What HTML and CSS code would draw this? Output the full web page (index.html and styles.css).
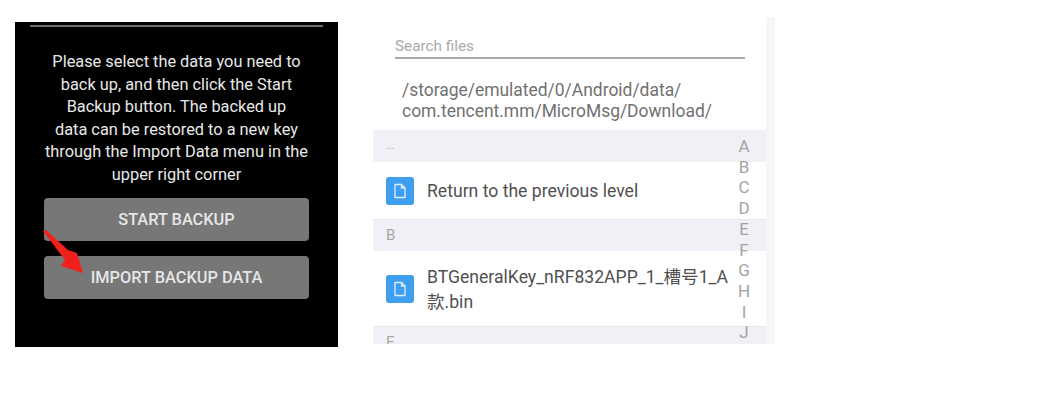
FILE: index.html
```html
<!DOCTYPE html>
<html lang="en">
<head>
  <meta charset="UTF-8" />
  <title>Backup and file picker</title>
  <link rel="stylesheet" href="styles.css">
</head>
<body>
  <div class="page">
    <section class="backup">
      <div class="backup-rule"></div>
      <p class="backup-text">Please select the data you need to<br>back up, and then click the Start<br>Backup button. The backed up<br>data can be restored to a new key<br>through the Import Data menu in the<br>upper right corner</p>
      <div class="btn">START BACKUP</div>
      <div class="btn">IMPORT BACKUP DATA</div>
      <svg class="arrow" width="44" height="48" viewBox="0 0 44 48">
        <path d="M0 2 L3 1 L25 21 L34 24 L40 44 L18 37 L22 31 Z" fill="#f0211c"/>
      </svg>
    </section>

    <section class="picker">
      <div class="picker-main">
        <div class="search">Search files</div>
        <div class="path">/storage/emulated/0/Android/data/<br>com.tencent.mm/MicroMsg/Download/</div>
        <div class="group first">...</div>
        <div class="row row-short">
          <span class="file-icon">
            <svg width="14" height="16" viewBox="0 0 14 16"><path d="M2 1.5 H8.5 L12 5 V14.5 H2 Z M8.5 1.5 V5 H12" fill="none" stroke="#d9eeff" stroke-width="1.3"/></svg>
          </span>
          <span class="row-name">Return to the previous level</span>
        </div>
        <div class="group">B</div>
        <div class="row row-tall">
          <span class="file-icon">
            <svg width="14" height="16" viewBox="0 0 14 16"><path d="M2 1.5 H8.5 L12 5 V14.5 H2 Z M8.5 1.5 V5 H12" fill="none" stroke="#d9eeff" stroke-width="1.3"/></svg>
          </span>
          <span class="row-name">BTGeneralKey_nRF832APP_1_槽号1_A<br>款.bin</span>
        </div>
        <div class="group">E</div>
      </div>
      <div class="picker-strip"></div>
      <ul class="letters">
        <li>A</li><li>B</li><li>C</li><li>D</li><li>E</li><li>F</li><li>G</li><li>H</li><li>I</li><li>J</li>
      </ul>
    </section>
  </div>
</body>
</html>
```

FILE: styles.css
```css
body {
  margin: 0;
  background: #fff;
  font-family: Roboto, "Noto Sans CJK SC", sans-serif;
}

.page {
  display: flex;
  align-items: flex-start;
  gap: 35px;
  padding: 17px 0 0 15px;
}

/* left phone shot */
.backup {
  position: relative;
  width: 323px;
  height: 325px;
  margin-top: 5px;
  background: #000;
  padding: 3px 15px 0;
  box-sizing: border-box;
}

.backup-rule {
  height: 2px;
  background: #6f6f6f;
}

.backup-text {
  margin: 24px 0 12px;
  color: #e8e8e8;
  font-size: 16.35px;
  line-height: 22.5px;
  text-align: center;
}

.btn {
  height: 43px;
  margin: 0 14px 15px;
  border-radius: 4px;
  background: #777;
  color: #e6e6e6;
  font-size: 16.35px;
  font-weight: 500;
  display: flex;
  align-items: center;
  justify-content: center;
}

.arrow {
  position: absolute;
  left: 28px;
  top: 207px;
}

/* right phone shot */
.picker {
  position: relative;
  display: flex;
  width: 402px;
  height: 327px;
  overflow: hidden;
}

.picker-main {
  width: 393px;
}

.picker-strip {
  flex: 1;
  background: #f6f6f8;
}

.search {
  margin: 20px 21px 0 22px;
  height: 19px;
  padding-top: 1px;
  border-bottom: 2px solid #a8a8a8;
  color: #a9a9a9;
  font-size: 15.3px;
  line-height: 17px;
}

.path {
  margin: 21px 0 8px 29px;
  color: #717171;
  font-size: 17.45px;
  line-height: 21px;
}

.group {
  height: 31px;
  padding-left: 13px;
  background: #f0f0f6;
  border-top: 1px solid #e6e6ec;
  color: #a8a8a8;
  font-size: 15px;
  line-height: 31px;
}

.group.first {
  border-top: 0;
  height: 32px;
  font-size: 11px;
}

.row {
  display: flex;
  align-items: center;
  gap: 13px;
  padding-left: 13px;
  background: #fff;
}

.row-short {
  height: 57px;
}

.row-tall {
  height: 75px;
}

.row-name {
  padding-top: 2px;
  color: #505050;
  font-size: 17.6px;
  line-height: 25px;
}

.file-icon {
  width: 28px;
  height: 28px;
  flex: none;
  border-radius: 3px;
  background: #3e9fee;
  display: flex;
  align-items: center;
  justify-content: center;
}

.letters {
  position: absolute;
  top: 119px;
  right: 23px;
  width: 16px;
  margin: 0;
  padding: 0;
  list-style: none;
  color: #a3a3a3;
  font-size: 17px;
  line-height: 20.7px;
  text-align: center;
}
```
